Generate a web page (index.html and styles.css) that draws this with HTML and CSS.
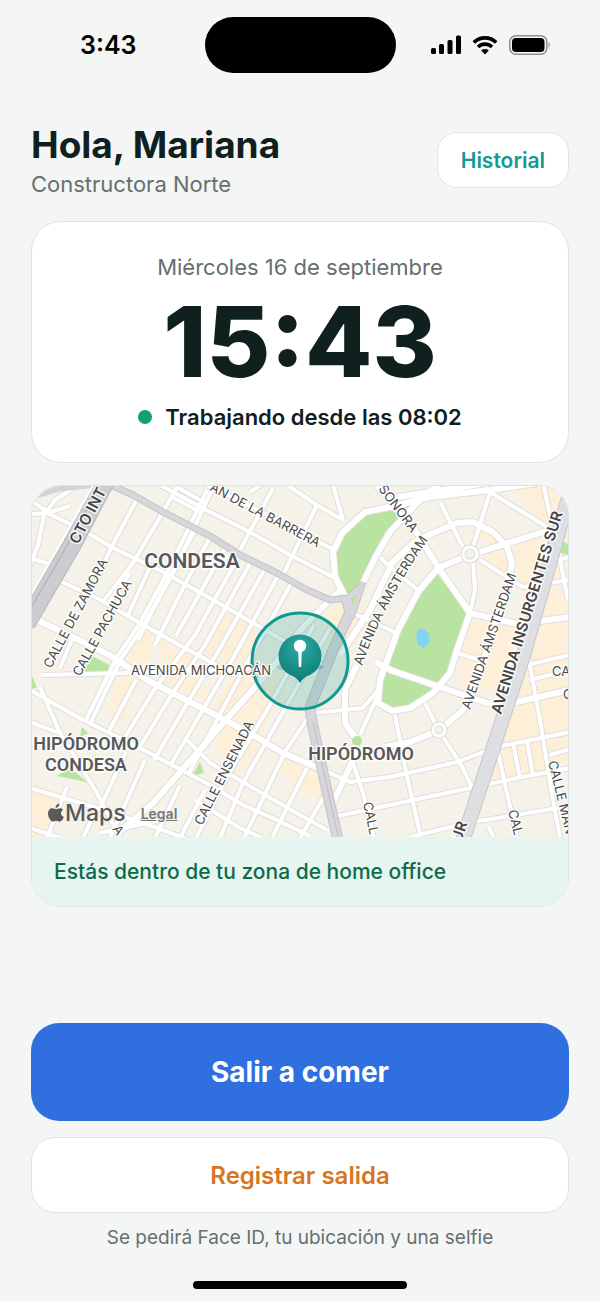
FILE: index.html
```html
<!DOCTYPE html>
<html lang="es">
<head>
    <meta charset="UTF-8">
    <meta name="viewport" content="width=device-width, initial-scale=1.0">
    <title>Registro de jornada</title>
    <link rel="stylesheet" href="styles.css">
</head>
<body>

    <div class="status-bar">
        <span class="status-time">3:43</span>
        <span class="island"></span>
        <span class="status-icons">
            <svg width="30" height="20" viewBox="0 0 30 20">
                <rect x="0" y="13" width="5" height="6" rx="1.5"/>
                <rect x="8" y="9" width="5" height="10" rx="1.5"/>
                <rect x="16.500" y="5" width="5" height="14" rx="1.5"/>
                <rect x="25" y="0.500" width="5" height="18.500" rx="1.5"/>
            </svg>
            <svg width="26" height="20" viewBox="0 0 26 20">
                <path d="M1.800 7.500a16 16 0 0 1 22.400 0" fill="none" stroke="#000" stroke-width="3.800"/>
                <path d="M6 12a10 10 0 0 1 14 0" fill="none" stroke="#000" stroke-width="3.600"/>
                <path d="M13 19.500l-3.800-4a5.600 5.600 0 0 1 7.600 0z"/>
            </svg>
            <svg width="42" height="20" viewBox="0 0 42 20">
                <rect x="0.800" y="0.800" width="37" height="18.400" rx="6" fill="none" stroke="#8d8f8e" stroke-width="1.500"/>
                <rect x="3" y="3" width="32.500" height="14" rx="4"/>
                <path d="M39.500 7q2.500 3 0 6z" fill="#8d8f8e"/>
            </svg>
        </span>
    </div>

    <main>
        <header class="header">
            <div>
                <h1>Hola, Mariana</h1>
                <p class="company">Constructora Norte</p>
            </div>
            <button type="button" class="history-button">Historial</button>
        </header>

        <section class="card clock-card">
            <p class="date">Miércoles 16 de septiembre</p>
            <p class="clock">15:43</p>
            <p class="status"><span class="dot"></span>Trabajando desde las 08:02</p>
        </section>

        <section class="card map-card">
            <div class="map">
                <svg class="map-drawing" viewBox="32 486 536 351" preserveAspectRatio="xMidYMid slice" role="img" aria-label="Mapa de la zona">
                    <defs>
                        <radialGradient id="pin" cx="50%" cy="25%" r="80%">
                            <stop offset="0" stop-color="#2fa9a0"/>
                            <stop offset="1" stop-color="#067a74"/>
                        </radialGradient>
                        <path id="amsterdam-west" d="M362 666Q384 602 430 537"/>
                        <!-- side streets -->
                        <g id="streets">
                            <!-- Condesa, north west to south east -->
                            <path d="M30 514L47 513L83 530L113 548L163 572L210 598L253 623L300 650L330 662"/>
                            <path d="M62 582L97 598L140 623L183 647L222 668"/>
                            <path d="M160 485L210 512L250 532L290 555L333 577"/>
                            <path d="M205 484L262 512L334 550"/>
                            <path d="M287 485L317 505L343 520M333 485L343 520"/>
                            <path d="M177 487L207 504M172 497L200 512"/>
                            <path d="M30 558L50 564M30 500L45 510L38 545L30 566M47 511L55 500L75 487M47 513L70 506"/>
                            <path d="M30 690L83 720L140 748L187 773L210 785L243 805L277 820L310 836"/>
                            <path d="M30 788L97 808L143 823L190 840M30 722L62 734"/>
                            <path d="M30 828L60 838M100 833L160 820"/>
                            <path d="M187 740L210 763L253 788L300 815L327 830"/>
                            <path d="M195 800L240 828L262 838"/>
                            <path d="M43 675L130 673L210 671L290 666L330 664"/>
                            <!-- Condesa, north east to south west -->
                            <path d="M138 497L111 548L98 577M177 487L160 517L133 563L102 603"/>
                            <path d="M207 490L167 573L140 623L117 657L85 722"/>
                            <path d="M212 490L172 575L144 625L121 659L90 724"/>
                            <path d="M73 637L60 668M130 573L108 604M150 567L128 615"/>
                            <path d="M195 530L160 595L138 640M210 537L182 590L155 645"/>
                            <path d="M225 548L176 636M240 554L195 635L154 690L122 742"/>
                            <path d="M252 560L205 645L172 694L138 750M266 567L219 650L188 702L154 760"/>
                            <path d="M279 574L232 660L170 766M292 582L246 665L188 775"/>
                            <path d="M314 625L270 705L228 775L196 838"/>
                            <path d="M330 628L283 712L243 783L220 838"/>
                            <path d="M313 710L285 752L255 815L244 838M307 768L272 838M325 795L300 838"/>
                            <path d="M273 488L240 550M317 505L282 577M262 484L250 492"/>
                            <path d="M136 680L108 733M145 760L110 838M180 785L155 838M205 790L180 838M126 752L100 808"/>
                            <path d="M40 687L60 733L97 793L120 838M67 787L47 838M97 808L83 838"/>
                            <!-- Hipódromo -->
                            <path d="M490 492L473 547M440 502L463 547M490 492L547 527M543 483L552 525"/>
                            <path d="M473 562L475 590L470 613M480 560L523 587L568 580"/>
                            <path d="M353 613L390 630L397 634M380 557L390 567L418 590"/>
                            <path d="M313 713L363 708L378 690M425 703L435 723M443 737L460 763L472 787"/>
                            <path d="M395 715L405 767L421 838M353 763L363 793L374 838"/>
                            <path d="M378 695L360 735M323 770L350 782L390 777L457 762L497 747L570 732"/>
                            <path d="M333 817L390 805L470 788L517 778L570 768M410 837L467 823L570 806"/>
                            <path d="M457 653L487 662M488 826L494 838"/>
                            <!-- east of Insurgentes -->
                            <path d="M528 655L540 720L553 800L560 838M497 748L517 838M513 743L520 778M527 741L533 775"/>
                            <path d="M530 680L570 670M518 667L570 655M550 755L570 749M556 540L568 600M548 562L570 557"/>
                        </g>
                        <!-- avenues -->
                        <g id="avenues">
                            <path d="M37 620L73 637L113 657L147 680L210 712L253 735L283 753L323 770"/>
                            <path d="M340 590L303 627L270 670L210 738L153 803L118 833"/>
                            <path d="M400 505L365 512L342 533L333 552L335 577L347 600"/>
                            <path d="M363 583L376 556L390 532L420 500L440 483"/>
                            <path d="M390 507L430 497L490 490L537 483M392 498L430 492L480 484"/>
                            <path d="M376 484L417 533L440 570L470 613L517 624L570 617"/>
                            <path d="M462 558L438 568L418 592L398 630L380 680L378 703L392 711L410 708L433 693L450 673L457 650L470 613"/>
                            <path d="M357 665L345 690L345 723L357 740L353 760L333 803"/>
                            <path d="M340 655L370 610L392 563L413 543L433 533L457 523L473 522L493 532L507 547L512 563L508 583L487 650L463 710L440 730L410 742L385 747"/>
                            <path d="M480 552L543 532L570 527M390 670L440 687L487 703L503 705L570 690M375 662L395 672"/>
                        </g>
                    </defs>

                    <rect x="32" y="486" width="536" height="351" fill="#f5f2e9"/>
                    <!-- commercial blocks -->
                    <g fill="#fdefd8">
                        <path d="M143 628L158 637L122 722L104 712L128 660z"/>
                        <path d="M158 640L200 662L212 705L165 682z"/>
                        <path d="M225 610L260 635L250 670L290 675L262 735L215 708L235 665L205 655z"/>
                        <path d="M225 715L262 742L240 775L215 745zM283 755L312 770L335 785L332 806L300 790L275 768z"/>
                        <path d="M355 600L370 612L345 650L322 640L330 606z"/>
                        <path d="M460 530L490 531L507 548L508 575L482 557L490 540z"/>
                        <path d="M510 486L568 486L568 560L548 600L520 585L514 550L545 525z"/>
                        <path d="M472 620L518 628L500 690L462 690L460 660z"/>
                        <path d="M525 590L568 590L568 760L520 778L482 788L510 715z"/>
                        <path d="M30 788L60 800L45 837L30 837z"/>
                    </g>
                    <g fill="#b8e3a0">
                        <path d="M413 502L366 514L343 535L336 552L338 575L348 596L362 580L375 553L392 528z"/>
                        <path d="M437 574L468 613L457 648L450 674L431 696L412 705L392 708L381 701L383 680L398 632L420 594z"/>
                        <path d="M432 492L438 484L445 484L436 495zM560 540L570 545L570 556L558 552z"/>
                        <path d="M92 656L115 668L113 672L84 672zM30 672L37 687L30 690zM70 768L87 782L57 776z"/>
                        <path d="M200 762L204 773L192 776zM82 727L88 733L80 737z"/>
                    </g>
                    <path d="M418 630l5-2l6 6l0 9l-5 5l-6-3l-2-8z" fill="#82d3f5"/>

                    <use href="#streets" class="street-edge"/>
                    <use href="#avenues" class="avenue-edge"/>
                    <use href="#streets" class="street"/>
                    <use href="#avenues" class="avenue"/>

                    <circle cx="470" cy="554" r="7" class="roundabout-edge"/>
                    <circle cx="470" cy="554" r="7" class="roundabout"/>
                    <circle cx="439" cy="730" r="6" class="roundabout-edge"/>
                    <circle cx="439" cy="730" r="6" class="roundabout"/>
                    <circle cx="357" cy="741" r="5" fill="#b8e3a0"/>

                    <!-- main roads -->
                    <g fill="none" stroke-linejoin="round">
                        <path d="M28 497L60 488L95 484" stroke="#d3d3d7" stroke-width="7"/>
                        <g stroke="#c3c3c8">
                            <path d="M100 480L133 495L163 512L210 536L240 555L277 573L307 590L330 600L348 598L362 586" stroke-width="7"/>
                            <path d="M363 582L353 612L333 650" stroke-width="7"/>
                            <path d="M346 598L350 612L333 650L310 707L312 722L323 773L338 840" stroke-width="11"/>
                        </g>
                        <g stroke="#d7d7db">
                            <path d="M100 480L133 495L163 512L210 536L240 555L277 573L307 590L330 600L348 598L362 586" stroke-width="5"/>
                            <path d="M363 582L353 612L333 650" stroke-width="5"/>
                            <path d="M346 598L350 612L333 650L310 707L312 722L323 773L338 840" stroke-width="9"/>
                        </g>
                        <path d="M351 598L357 595L352 607z" fill="#b8e3a0"/>
                        <path d="M313 722L324 773L339 840" stroke="#bdbdc2" stroke-width="1"/>
                        <path d="M106 480L72 545L26 624" stroke="#b7b7bc" stroke-width="19"/>
                        <path d="M106 480L72 545L26 624" stroke="#cdcdd1" stroke-width="17"/>
                        <path d="M102 480L68 544L24 620" stroke="#a9a9ad" stroke-width="1"/>
                        <path d="M96 480L62 541L20 614" stroke="#fff" stroke-width="2"/>
                        <path d="M572 485L523 657L463 840" stroke="#c5c6ca" stroke-width="15"/>
                        <path d="M572 485L523 657L463 840" stroke="#dedfe3" stroke-width="13"/>
                    </g>

                    <!-- home office zone -->
                    <circle cx="300" cy="661" r="48" fill="#0d9488" fill-opacity="0.200" stroke="#0f9a90" stroke-width="3"/>

                    <g class="street-name">
                        <text transform="translate(51 669) rotate(-62)">CALLE DE ZAMORA</text>
                        <text transform="translate(80 677) rotate(-61)">CALLE PACHUCA</text>
                        <text transform="translate(209 490) rotate(28)">AN DE LA BARRERA</text>
                        <text x="131" y="675">AVENIDA MICHOACÁN</text>
                        <text transform="translate(202 826) rotate(-63)">CALLE ENSENADA</text>
                        <text transform="translate(378 489) rotate(53)">SONORA</text>
                        <text><textPath href="#amsterdam-west">AVENIDA ÁMSTERDAM</textPath></text>
                        <text transform="translate(470 710) rotate(-71)">AVENIDA ÁMSTERDAM</text>
                        <text transform="translate(363 803) rotate(78)">CALL</text>
                        <text transform="translate(508 811) rotate(76)">CAL</text>
                        <text transform="translate(548 762) rotate(76)">CALLE MAN</text>
                        <text x="552" y="676">CA</text>
                        <text x="563" y="699">C</text>
                        <text transform="translate(112 829) rotate(55)">A</text>
                    </g>
                    <g class="main-street-name">
                        <text transform="translate(78 545) rotate(-62)">CTO INT</text>
                        <text transform="translate(501 715) rotate(-73)">AVENIDA INSURGENTES SUR</text>
                        <text transform="translate(461 843) rotate(-72)">UR</text>
                    </g>
                    <g class="district-name">
                        <text x="192" y="568" class="large">CONDESA</text>
                        <text x="86" y="750">HIPÓDROMO</text>
                        <text x="86" y="771">CONDESA</text>
                        <text x="361" y="760">HIPÓDROMO</text>
                    </g>

                    <!-- location pin -->
                    <ellipse cx="300" cy="667" rx="24" ry="4" fill="#37817c" fill-opacity="0.300"/>
                    <path d="M300 683c-2-4-6-7-10-8a21.500 21.500 0 1 1 20 0c-4 1-8 4-10 8z" fill="url(#pin)"/>
                    <path d="M298.200 650h3.600l-.6 17h-2.400z" fill="#fff"/>
                    <circle cx="300" cy="646" r="6.200" fill="#fff"/>
                </svg>
                <div class="attribution">
                    <span class="maps-logo">
                        <svg width="16" height="20" viewBox="0 0 16 20">
                            <path d="M11.500 0.500c.2 2.400-1.800 4.300-3.900 4.300c-.2-2.200 1.700-4.100 3.900-4.300z"/>
                            <path d="M15 7c-3 1.800-2.500 5.700.8 6.900c-.8 2.200-2.300 4.600-4 4.600c-1.400 0-1.900-.8-3.500-.8s-2.200.8-3.500.8c-2.300 0-4.800-4.500-4.800-7.900c0-3.400 2.100-5.300 4.300-5.300c1.600 0 2.800.9 3.700.9s2.200-1 4-1c1.200 0 2.300.6 3 1.800z"/>
                        </svg>
                        Maps
                    </span>
                    <a href="#legal" class="legal">Legal</a>
                </div>
            </div>
            <p class="zone-message">Estás dentro de tu zona de home office</p>
        </section>
    </main>

    <footer class="actions">
        <button type="button" class="lunch-button">Salir a comer</button>
        <button type="button" class="exit-button">Registrar salida</button>
        <p class="hint">Se pedirá Face ID, tu ubicación y una selfie</p>
        <div class="home-indicator"></div>
    </footer>

</body>
</html>
```
FILE: styles.css
```css
* {
    box-sizing: border-box;
}

body {
    margin: 0;
    min-height: 100vh;
    display: flex;
    flex-direction: column;
    font-family: Inter, "Liberation Sans", sans-serif;
    color: #10201e;
    background: #f3f6f5;
}

h1,
p {
    margin: 0;
}

button {
    font-family: inherit;
    cursor: pointer;
}

/* status bar */
.status-bar {
    display: grid;
    grid-template-columns: 1fr 191px 1fr;
    align-items: center;
    padding-top: 17px;
    color: #000;
}

.status-time {
    padding-left: 12px;
    font-size: 25px;
    font-weight: 600;
    text-align: center;
}

.island {
    height: 56px;
    border-radius: 28px;
    background: #000;
}

.status-icons {
    display: flex;
    justify-content: center;
    gap: 11px;
    padding-right: 14px;
}

/* content */
main {
    flex: 1;
    display: flex;
    flex-direction: column;
    gap: 22px;
    padding: 48px 31px 24px;
}

.header {
    display: flex;
    justify-content: space-between;
    align-items: center;
}

h1 {
    font-size: 37px;
    line-height: 48px;
    font-weight: 700;
}

.company {
    font-size: 22px;
    line-height: 30px;
    color: #66706e;
}

.history-button {
    height: 56px;
    padding: 0 23px;
    font-size: 21px;
    font-weight: 600;
    color: #109a92;
    background: #fff;
    border: 1px solid #e0e6e5;
    border-radius: 20px;
}

.card {
    background: #fff;
    border: 1px solid #dde4e2;
    border-radius: 30px;
    overflow: hidden;
}

.clock-card {
    padding: 30px 20px;
    text-align: center;
}

.date {
    font-size: 22px;
    line-height: 30px;
    color: #66706e;
}

.clock {
    font-size: 98px;
    line-height: 120px;
    font-weight: 800;
}

.status {
    display: flex;
    justify-content: center;
    align-items: center;
    gap: 13px;
    font-size: 22px;
    line-height: 30px;
    font-weight: 600;
}

.dot {
    width: 14px;
    height: 14px;
    border-radius: 50%;
    background: #12a06f;
}

/* map */
.map {
    position: relative;
}

.map-drawing {
    display: block;
    width: 100%;
}

.street-edge,
.avenue-edge,
.street,
.avenue {
    fill: none;
    stroke-linejoin: round;
}

.street-edge {
    stroke: #e0dedb;
    stroke-width: 6px;
}

.avenue-edge {
    stroke: #e0dedb;
    stroke-width: 8px;
}

.street {
    stroke: #fff;
    stroke-width: 4px;
}

.avenue {
    stroke: #fff;
    stroke-width: 6px;
}

.roundabout-edge {
    fill: #f5f2e9;
    stroke: #dcdad8;
    stroke-width: 5px;
}

.roundabout {
    fill: none;
    stroke: #fff;
    stroke-width: 3px;
}

.map-drawing text {
    paint-order: stroke;
    stroke: #fff;
    stroke-opacity: 0.8;
    stroke-width: 3px;
    stroke-linejoin: round;
}

.street-name {
    font-size: 13px;
    font-weight: 400;
    fill: #4a4a4a;
}

.main-street-name {
    font-size: 15px;
    font-weight: 600;
    fill: #444;
}

.district-name {
    font-family: Roboto, "Liberation Sans", sans-serif;
    font-size: 18px;
    font-weight: 600;
    text-anchor: middle;
    fill: #58585a;
}

.district-name .large {
    font-size: 21px;
}

.attribution {
    position: absolute;
    left: 16px;
    bottom: 8px;
    display: flex;
    align-items: center;
    gap: 15px;
    color: #59595b;
}

.maps-logo {
    display: flex;
    align-items: center;
    gap: 1px;
    font-size: 23px;
    line-height: 32px;
    font-weight: 500;
    fill: #59595b;
}

.legal {
    font-size: 14px;
    font-weight: 600;
    color: #77777a;
}

.zone-message {
    padding: 20px 22px 19px;
    font-size: 21px;
    line-height: 30px;
    font-weight: 500;
    color: #0c6b4a;
    background: #e6f5f0;
}

/* bottom actions */
.actions {
    display: flex;
    flex-direction: column;
    padding: 18px 31px 12px;
    border-top: 1px solid #edf0ef;
}

.lunch-button {
    height: 98px;
    font-size: 28px;
    font-weight: 700;
    color: #fff;
    background: #306fdf;
    border: none;
    border-radius: 28px;
}

.exit-button {
    height: 76px;
    margin-top: 16px;
    font-size: 24px;
    font-weight: 600;
    color: #d97421;
    background: #fff;
    border: 1px solid #dde4e2;
    border-radius: 24px;
}

.hint {
    margin-top: 10px;
    font-size: 19px;
    line-height: 30px;
    text-align: center;
    color: #66706e;
}

.home-indicator {
    align-self: center;
    width: 214px;
    height: 8px;
    margin-top: 28px;
    border-radius: 4px;
    background: #000;
}
```
